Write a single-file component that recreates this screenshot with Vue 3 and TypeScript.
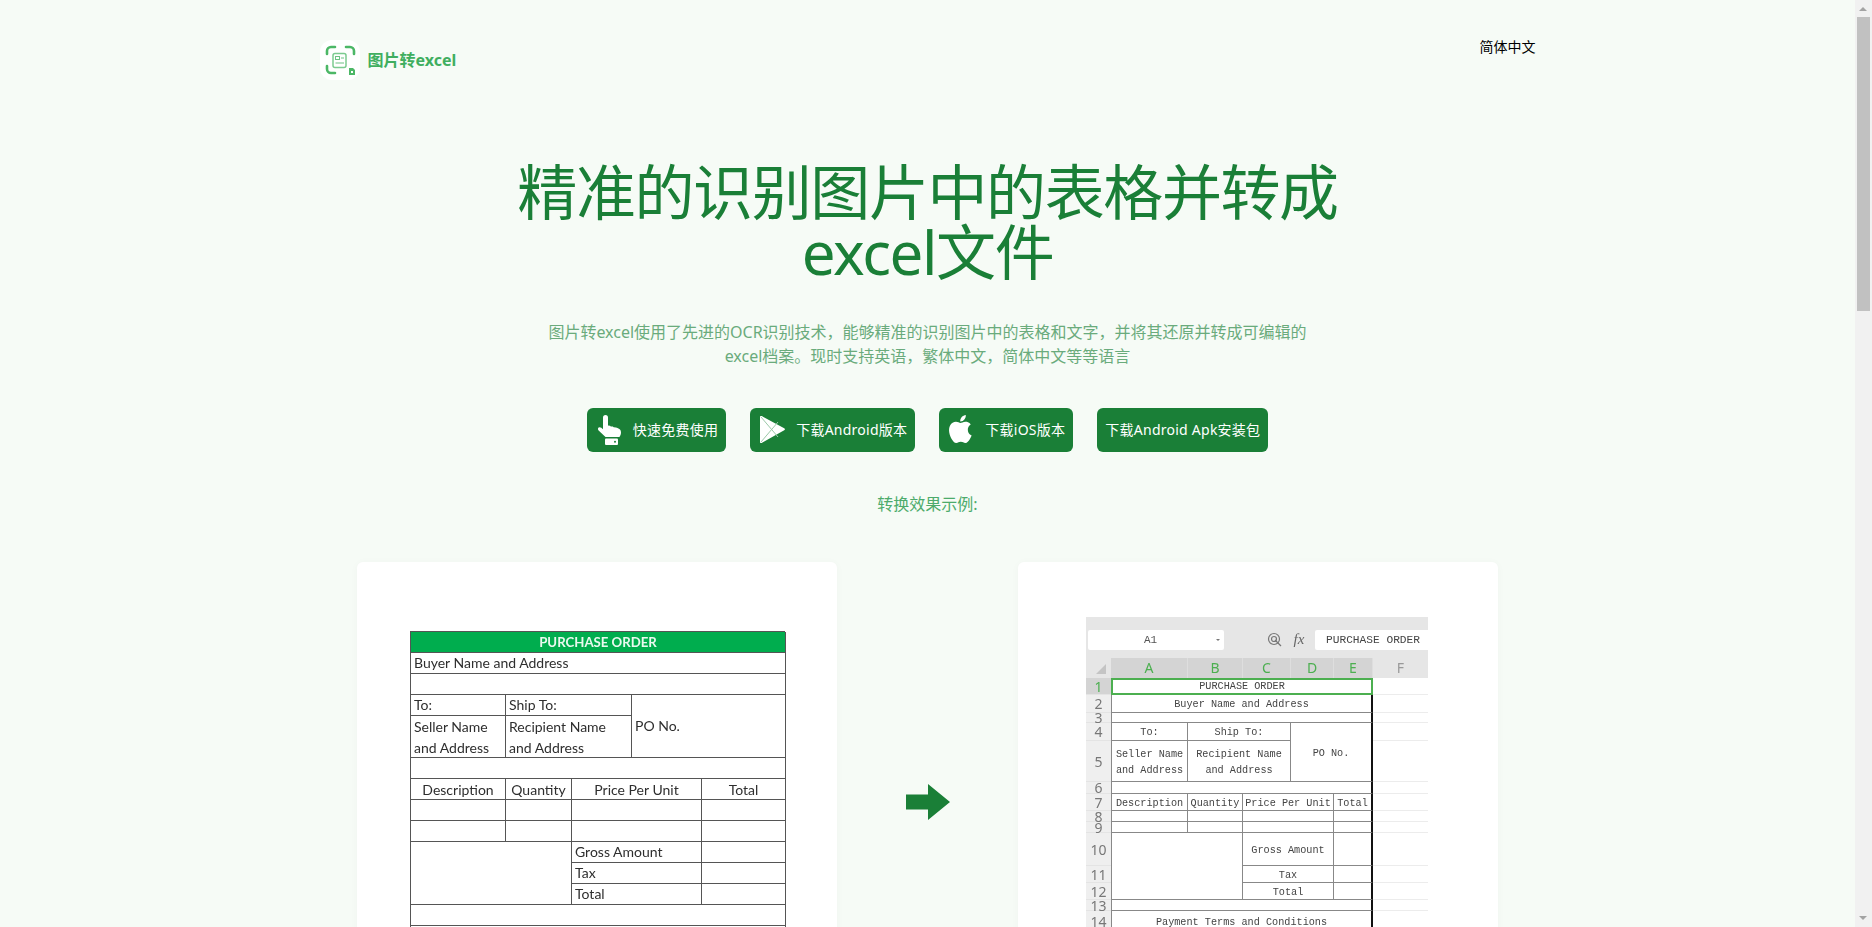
<script setup lang="ts">
interface Cell {
  text?: string
  col: number
  colSpan?: number
  row: number
  rowSpan?: number
  kind?: string
}

// 左边是原始图片里的采购单
const docCells: Cell[] = [
  { text: 'PURCHASE ORDER', col: 1, colSpan: 5, row: 1, kind: 'head' },
  { text: 'Buyer Name and Address', col: 1, colSpan: 5, row: 2 },
  { col: 1, colSpan: 5, row: 3 },
  { text: 'To:', col: 1, row: 4 },
  { text: 'Ship To:', col: 2, colSpan: 2, row: 4 },
  { text: 'PO No.', col: 4, colSpan: 2, row: 4, rowSpan: 3 },
  { text: 'Seller Name\nand Address', col: 1, row: 5, rowSpan: 2, kind: 'tall' },
  { text: 'Recipient Name\nand Address', col: 2, colSpan: 2, row: 5, rowSpan: 2, kind: 'tall' },
  { col: 1, colSpan: 5, row: 7 },
  { text: 'Description', col: 1, row: 8, kind: 'mid' },
  { text: 'Quantity', col: 2, row: 8, kind: 'mid' },
  { text: 'Price Per Unit', col: 3, colSpan: 2, row: 8, kind: 'mid' },
  { text: 'Total', col: 5, row: 8, kind: 'mid' },
  { col: 1, row: 9 },
  { col: 2, row: 9 },
  { col: 3, colSpan: 2, row: 9 },
  { col: 5, row: 9 },
  { col: 1, row: 10 },
  { col: 2, row: 10 },
  { col: 3, colSpan: 2, row: 10 },
  { col: 5, row: 10 },
  { col: 1, colSpan: 2, row: 11, rowSpan: 3 },
  { text: 'Gross Amount', col: 3, colSpan: 2, row: 11 },
  { col: 5, row: 11 },
  { text: 'Tax', col: 3, colSpan: 2, row: 12 },
  { col: 5, row: 12 },
  { text: 'Total', col: 3, colSpan: 2, row: 13 },
  { col: 5, row: 13 },
  { col: 1, colSpan: 5, row: 14 },
  { col: 1, colSpan: 5, row: 15 },
]

// 右边是转换后的表格，第1列是行号，第2到6列是A到E，第7列是F
const sheetCells: Cell[] = [
  { text: 'PURCHASE ORDER', col: 2, colSpan: 5, row: 1, kind: 'selected' },
  { text: 'Buyer Name and Address', col: 2, colSpan: 5, row: 2 },
  { col: 2, colSpan: 5, row: 3 },
  { text: 'To:', col: 2, row: 4 },
  { text: 'Ship To:', col: 3, colSpan: 2, row: 4 },
  { text: 'PO No.', col: 5, colSpan: 2, row: 4, rowSpan: 2 },
  { text: 'Seller Name\nand Address', col: 2, row: 5 },
  { text: 'Recipient Name\nand Address', col: 3, colSpan: 2, row: 5 },
  { col: 2, colSpan: 5, row: 6 },
  { text: 'Description', col: 2, row: 7 },
  { text: 'Quantity', col: 3, row: 7 },
  { text: 'Price Per Unit', col: 4, colSpan: 2, row: 7 },
  { text: 'Total', col: 6, row: 7 },
  { col: 2, row: 8 },
  { col: 3, row: 8 },
  { col: 4, colSpan: 2, row: 8 },
  { col: 6, row: 8 },
  { col: 2, row: 9 },
  { col: 3, row: 9 },
  { col: 4, colSpan: 2, row: 9 },
  { col: 6, row: 9 },
  { col: 2, colSpan: 2, row: 10, rowSpan: 3 },
  { text: 'Gross Amount', col: 4, colSpan: 2, row: 10 },
  { col: 6, row: 10 },
  { text: 'Tax', col: 4, colSpan: 2, row: 11 },
  { col: 6, row: 11 },
  { text: 'Total', col: 4, colSpan: 2, row: 12 },
  { col: 6, row: 12 },
  { col: 2, colSpan: 5, row: 13 },
  { text: 'Payment Terms and Conditions', col: 2, colSpan: 5, row: 14 },
]

const rowNumbers = Array.from({ length: 14 }, (_, i) => i + 1)
const sheetColumns = ['A', 'B', 'C', 'D', 'E']

const area = (c: Cell) => ({
  gridColumn: `${c.col} / span ${c.colSpan ?? 1}`,
  gridRow: `${c.row} / span ${c.rowSpan ?? 1}`,
})

const sheetClass = (c: Cell) => [
  c.kind,
  { first: c.col === 2, edge: c.col + (c.colSpan ?? 1) === 7 },
]
</script>

<template>
  <div class="viewport">
    <div class="page">
      <header class="top">
        <a class="brand">
          <span class="brand-icon">
            <svg width="40" height="40" viewBox="0 0 40 40" fill="none">
              <g stroke="#4cb766" stroke-width="2.6" stroke-linecap="round">
                <path d="M7 14V11a4 4 0 0 1 4-4h4" />
                <path d="M26 7h4a4 4 0 0 1 4 4v3" />
                <path d="M7 26v3a4 4 0 0 0 4 4h4" />
              </g>
              <rect x="13" y="13.5" width="13" height="14" rx="2" stroke="#7ccb90" stroke-width="1.5" />
              <rect x="15.5" y="16.5" width="4" height="3" stroke="#6cc283" stroke-width="1" />
              <path d="M21 18h3M15.5 23h8.5" stroke="#6cc283" stroke-width="1.2" />
              <path d="M29 28h4l2 2v5h-6z" fill="#4cb766" />
              <rect x="31" y="31" width="2" height="2" fill="#fff" />
            </svg>
          </span>
          <span class="brand-name">图片转excel</span>
        </a>
        <span class="lang">简体中文</span>
      </header>

      <main>
        <h1 class="headline">精准的识别图片中的表格并转成excel文件</h1>
        <p class="intro">
          图片转excel使用了先进的OCR识别技术，能够精准的识别图片中的表格和文字，并将其还原并转成可编辑的excel档案。现时支持英语，繁体中文，简体中文等等语言
        </p>

        <div class="actions">
          <a class="btn">
            <svg class="btn-icon" viewBox="0 0 32 32">
              <path
                fill="#fff"
                d="M8 3.500a2.500 2.500 0 0 1 5 0V11.500l2 .2 .8 .8 2 .1 .9 .7 2.300 .1 1.500 .6c2 .8 3.500 2 3.500 4.400 0 1.800-.7 3-1.600 4.600H10.500L3.600 16.500c-1.200-1.500-.6-3.300 1-3.300 1.200 0 2.300 .8 3.400 2z"
              />
              <rect x="10" y="24.500" width="13" height="6.500" rx="1" fill="#fff" />
              <circle cx="20" cy="27.800" r="1" fill="#1a7f37" />
            </svg>
            快速免费使用
          </a>
          <a class="btn">
            <svg class="btn-icon" viewBox="0 0 32 32">
              <path fill="#fff" d="M2 3c0-1 .8-1.400 1.700-.9L26.200 14.300c1 .6 1 1.400 0 2L3.700 28.900c-.9.5-1.700.1-1.700-.9z" />
              <path d="M3 3l17 20M3 28L20 8" stroke="#9cc9a9" stroke-width="1" fill="none" />
            </svg>
            下载Android版本
          </a>
          <a class="btn">
            <svg class="btn-icon" viewBox="0 0 32 32">
              <path
                fill="#fff"
                transform="translate(-0.5 1) scale(1.15 1.167)"
                d="M12.152 6.896c-.948 0-2.415-1.078-3.96-1.04-2.04.027-3.91 1.183-4.961 3.014-2.117 3.675-.546 9.103 1.519 12.09 1.013 1.454 2.208 3.09 3.792 3.039 1.52-.065 2.09-.987 3.935-.987 1.831 0 2.35.987 3.96.948 1.637-.026 2.676-1.48 3.676-2.948 1.156-1.688 1.636-3.325 1.662-3.415-.039-.013-3.182-1.221-3.22-4.857-.026-3.04 2.48-4.494 2.597-4.559-1.429-2.09-3.623-2.324-4.39-2.376-2-.156-3.675 1.09-4.61 1.09zM15.53 3.83c.843-1.012 1.4-2.427 1.245-3.83-1.207.052-2.662.805-3.532 1.818-.78.896-1.454 2.338-1.273 3.714 1.338.104 2.715-.688 3.559-1.701"
              />
            </svg>
            下载iOS版本
          </a>
          <a class="btn">下载Android Apk安装包</a>
        </div>

        <p class="example-title">转换效果示例:</p>

        <section class="compare">
          <div class="card">
            <div class="doc">
              <div
                v-for="(c, i) in docCells"
                :key="i"
                class="doc-cell"
                :class="c.kind"
                :style="area(c)"
              >{{ c.text }}</div>
            </div>
          </div>

          <svg class="arrow" width="44" height="36" viewBox="0 0 44 36">
            <path fill="#1a7f37" d="M0 10.500H22V0L44 18 22 36V25.500H0z" />
          </svg>

          <div class="card">
            <div class="sheet">
              <div class="formula">
                <span class="name-box">A1<i class="caret"></i></span>
                <svg class="lens" width="16" height="16" viewBox="0 0 16 16" fill="none" stroke="#777" stroke-width="1.2">
                  <circle cx="7" cy="7" r="5.5" />
                  <circle cx="7" cy="7" r="2.5" />
                  <path d="M8 8l6 6" />
                </svg>
                <span class="fx">fx</span>
                <span class="formula-box">PURCHASE ORDER</span>
              </div>
              <div class="col-heads">
                <span class="corner"></span>
                <span v-for="h in sheetColumns" :key="h" class="col-head">{{ h }}</span>
                <span class="col-head off">F</span>
              </div>
              <div class="grid">
                <template v-for="n in rowNumbers" :key="n">
                  <span class="row-head" :class="{ active: n === 1 }" :style="{ gridRow: n }">{{ n }}</span>
                  <span class="blank" :style="{ gridRow: n }"></span>
                </template>
                <div
                  v-for="(c, i) in sheetCells"
                  :key="i"
                  class="sheet-cell"
                  :class="sheetClass(c)"
                  :style="area(c)"
                >{{ c.text }}</div>
              </div>
            </div>
          </div>
        </section>
      </main>
    </div>

    <aside class="scrollbar">
      <i class="tri up"></i>
      <b class="thumb"></b>
      <i class="tri down"></i>
    </aside>
  </div>
</template>

<style scoped>
.viewport {
  height: 100vh;
  overflow: hidden;
  background: #f6fbf6;
}

.page {
  box-sizing: border-box;
  width: 1280px;
  margin-left: 287.5px;
  padding: 0 32px;
}

.top {
  display: flex;
  justify-content: space-between;
  align-items: flex-start;
  padding-top: 37px;
}

.brand {
  display: flex;
  align-items: center;
  gap: 8px;
  margin-top: 3px;
}

.brand-icon {
  display: block;
  width: 40px;
  height: 40px;
  background: #fff;
  border-radius: 12px;
}

.brand-name {
  margin-top: -2px;
  font-size: 16px;
  font-weight: 700;
  color: #3fae5f;
}

.lang {
  font-size: 14px;
  line-height: 20px;
  color: #000;
}

.headline {
  max-width: 896px;
  margin: 82px auto 0;
  font-size: 60px;
  line-height: 60px;
  font-weight: 400;
  letter-spacing: -1.4px;
  text-align: center;
  color: #1a7f37;
}

.intro {
  max-width: 768px;
  margin: 38px auto 0;
  font-size: 16px;
  line-height: 24px;
  text-align: center;
  color: #6aab7c;
}

.actions {
  display: flex;
  justify-content: center;
  gap: 24px;
  margin-top: 40px;
}

.btn {
  display: flex;
  align-items: center;
  box-sizing: border-box;
  height: 44px;
  padding: 0 8px 2px;
  border-radius: 6px;
  background: #1a7f37;
  color: #fff;
  font-size: 14px;
  letter-spacing: 0.25px;
  white-space: nowrap;
}

.btn-icon {
  width: 32px;
  height: 32px;
  margin: 2px 6px 0 0;
}

.example-title {
  margin: 40px 0 0;
  font-size: 16px;
  line-height: 24px;
  text-align: center;
  color: #4cab6b;
}

.compare {
  display: grid;
  grid-template-columns: 480px 181px 480px;
  justify-content: center;
  justify-items: center;
  align-items: center;
  margin-top: 46px;
}

.card {
  position: relative;
  box-sizing: border-box;
  width: 480px;
  height: 480px;
  overflow: hidden;
  background: #fff;
  border-radius: 6px;
  box-shadow: 0 1px 8px rgba(0, 0, 0, 0.03);
}

/* 原始图片 */
.doc {
  display: grid;
  grid-template-columns: 95px 66px 60px 70px 84px;
  grid-auto-rows: 21px;
  margin: 69px 0 0 53px;
  width: 375px;
  border-top: 1px solid #555;
  border-left: 1px solid #555;
  box-sizing: border-box;
  font-family: Lato, "Liberation Sans", sans-serif;
  font-size: 14px;
  color: #2e2e2e;
  filter: blur(0.35px);
}

.doc-cell {
  display: flex;
  align-items: center;
  box-sizing: border-box;
  padding: 0 0 1px 3px;
  line-height: 21px;
  white-space: pre-line;
  border-right: 1px solid #555;
  border-bottom: 1px solid #555;
}

.doc-cell.head {
  justify-content: center;
  padding: 0;
  background: #00ad4e;
  color: #e9f9ef;
  font-size: 13.2px;
  font-weight: 700;
}

.doc-cell.tall {
  padding-bottom: 0;
}

.doc-cell.mid {
  justify-content: center;
  padding: 0;
}

/* 转换后的表格 */
.sheet {
  width: 342px;
  margin: 55px 0 0 68px;
  background: #fff;
  filter: blur(0.3px);
}

.formula {
  display: flex;
  align-items: center;
  height: 41px;
  padding: 4px 0 0 2px;
  box-sizing: border-box;
  background: #e6e6e6;
}

.name-box {
  position: relative;
  box-sizing: border-box;
  width: 136px;
  height: 20px;
  padding-left: 56px;
  border-radius: 2px;
  background: #fff;
  font: 11px/20px "Liberation Mono", monospace;
  color: #555;
}

.caret {
  position: absolute;
  right: 4px;
  top: 9px;
  border: 2px solid transparent;
  border-top-color: #777;
}

.lens {
  margin-left: 43px;
}

.fx {
  width: 32px;
  text-align: center;
  font: italic 15px "Liberation Serif", serif;
  color: #666;
}

.formula-box {
  flex: 1;
  height: 20px;
  padding-left: 11px;
  border-radius: 2px 0 0 2px;
  background: #fff;
  font: 11.2px/20px "Liberation Mono", monospace;
  color: #444;
}

.col-heads {
  display: grid;
  grid-template-columns: 25px 77px 55px 48px 43px 39px 55px;
  height: 20px;
  background: #e6e6e6;
}

.corner {
  position: relative;
}

.corner::after {
  content: "";
  position: absolute;
  right: 5px;
  bottom: 4px;
  border-style: solid;
  border-width: 0 0 10px 10px;
  border-color: transparent transparent #c4c4c4 transparent;
}

.col-head {
  background: #d4d4d4;
  border-right: 1px solid #dedede;
  text-align: center;
  font-size: 14px;
  line-height: 20px;
  color: #4caf50;
}

.col-head.off {
  background: transparent;
  color: #999;
  border: 0;
}

.grid {
  display: grid;
  grid-template-columns: 25px 77px 55px 48px 43px 39px 55px;
  grid-template-rows: 17px 18px 10px 18px 41px 12px 17px 11px 11px 33px 17px 17px 11px 21px;
}

.row-head {
  display: flex;
  align-items: center;
  justify-content: center;
  grid-column: 1;
  box-sizing: border-box;
  background: #efefef;
  border-bottom: 1px solid #e4e4e4;
  font-size: 14px;
  line-height: 9px;
  color: #777;
}

.row-head.active {
  background: #d4d4d4;
  color: #4caf50;
}

.blank {
  grid-column: 7;
  border-bottom: 1px solid #ececec;
}

.sheet-cell {
  display: flex;
  align-items: center;
  justify-content: center;
  box-sizing: border-box;
  padding-top: 3px;
  font: 10.2px/16px "Liberation Mono", monospace;
  text-align: center;
  white-space: pre-line;
  color: #444;
  border-right: 1px solid #888;
  border-bottom: 1px solid #888;
}

.sheet-cell.first {
  border-left: 1px solid #888;
}

.sheet-cell.edge {
  border-right: 2px solid #111;
}

.sheet-cell.selected {
  padding-top: 1px;
  border: 2px solid #4caf50;
}

.arrow {
  display: block;
}

/* 页面滚动条 */
.scrollbar {
  position: fixed;
  top: 0;
  right: 0;
  width: 17px;
  height: 100%;
  background: #f1f1f1;
}

.thumb {
  position: absolute;
  top: 17px;
  left: 2px;
  width: 13px;
  height: 294px;
  background: #c1c1c1;
}

.tri {
  position: absolute;
  left: 4px;
  border: 4px solid transparent;
  border-left-width: 4.5px;
  border-right-width: 4.5px;
}

.tri.up {
  top: 3px;
  border-bottom-color: #a3a3a3;
}

.tri.down {
  bottom: 3px;
  border-top-color: #a3a3a3;
}
</style>

<style>
body {
  margin: 0;
  font-family: "Noto Sans", "Noto Sans CJK SC", sans-serif;
}
</style>
